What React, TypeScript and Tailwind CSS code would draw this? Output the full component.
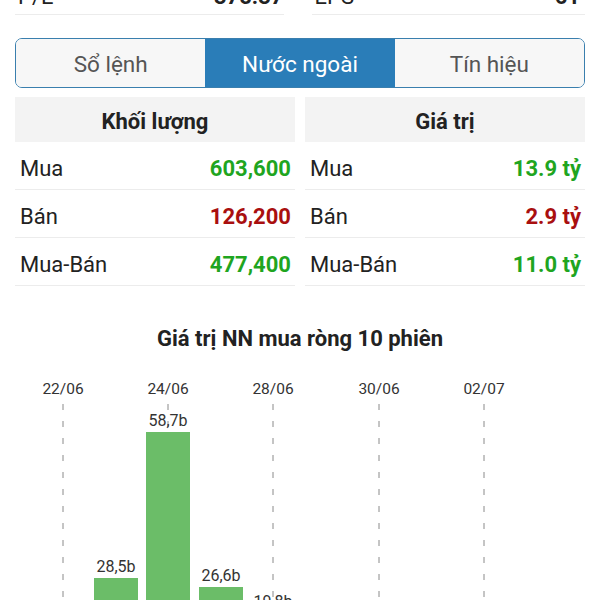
import React from "react"

const font = { fontFamily: "Roboto, 'Noto Sans', sans-serif" }

const tabs = ["Sổ lệnh", "Nước ngoài", "Tín hiệu"]

const volume = [
    { label: "Mua", value: "603,600", tone: "text-[#1fa51f]" },
    { label: "Bán", value: "126,200", tone: "text-[#a90f0f]" },
    { label: "Mua-Bán", value: "477,400", tone: "text-[#1fa51f]" },
]

const money = [
    { label: "Mua", value: "13.9 tỷ", tone: "text-[#1fa51f]" },
    { label: "Bán", value: "2.9 tỷ", tone: "text-[#a90f0f]" },
    { label: "Mua-Bán", value: "11.0 tỷ", tone: "text-[#1fa51f]" },
]

const dates = [
    { x: 63, label: "22/06" },
    { x: 168, label: "24/06" },
    { x: 273, label: "28/06" },
    { x: 379, label: "30/06" },
    { x: 484, label: "02/07" },
]

// top of each bar in page px; chart svg starts at y=374
const bars = [
    { cx: 63, top: 640, label: "" },
    { cx: 116, top: 577, label: "28,5b" },
    { cx: 168, top: 431, label: "58,7b" },
    { cx: 221, top: 586, label: "26,6b" },
    { cx: 273, top: 612, label: "19,8b" },
]

const Table = ({ title, rows }: { title: string; rows: typeof volume }) => (
    <div className="flex-1">
        <div className="h-[45px] bg-[#f3f3f3] flex items-center justify-center text-[22px] font-bold text-[#222] pt-[3px]">
            {title}
        </div>
        {rows.map((r) => (
            <div
                key={r.label}
                className="h-[48px] border-b border-[#ececec] flex items-center justify-between pl-[5px] pr-[4px] pt-[6px] text-[22px]"
            >
                <span className="text-[#222]">{r.label}</span>
                <span className={`font-bold ${r.tone}`}>{r.value}</span>
            </div>
        ))}
    </div>
)

export default function App() {
    return (
        <div className="w-[600px] h-[600px] overflow-hidden bg-white" style={font}>
            {/* cut-off row above */}
            <div className="flex gap-[28px] px-[15px] -mt-[26px]">
                <div className="flex-1 h-[41px] border-b border-[#ececec] flex items-center justify-between text-[22px] font-bold text-[#222] pl-[3px] pt-[4px]">
                    <span className="font-normal">P/E</span>
                    <span>375.37</span>
                </div>
                <div className="flex-1 h-[41px] border-b border-[#ececec] flex items-center justify-between text-[22px] font-bold text-[#222] pl-[3px] pr-[5px] pt-[4px]">
                    <span className="font-normal">EPS</span>
                    <span>61</span>
                </div>
            </div>

            {/* tabs */}
            <div className="mx-[15px] mt-[23px] h-[50px] flex rounded-[7px] border-[1.5px] border-[#3a7fae] overflow-hidden">
                {tabs.map((t, i) => (
                    <div
                        key={t}
                        className={`flex-1 flex items-center justify-center text-[22.5px] pt-[3px] ${
                            i === 1 ? "bg-[#2a7db8] text-white" : "bg-[#f7f7f7] text-[#555]"
                        }`}
                    >
                        {t}
                    </div>
                ))}
            </div>

            {/* tables */}
            <div className="flex gap-[10px] mx-[15px] mt-[9px]">
                <Table title="Khối lượng" rows={volume} />
                <Table title="Giá trị" rows={money} />
            </div>

            {/* chart */}
            <div className="mt-[40px] h-[26px] leading-[26px] text-center text-[22px] font-bold text-[#222]">
                Giá trị NN mua ròng 10 phiên
            </div>
            <svg width="600" height="226" className="block mt-[23px]">
                {dates.map((d) => (
                    <g key={d.label}>
                        <text x={d.x} y={19} textAnchor="middle" fontSize="15.5" fill="#333" fontFamily="Roboto, sans-serif">
                            {d.label}
                        </text>
                        <line x1={d.x} y1={29} x2={d.x} y2={226} stroke="#8a8a8a" strokeWidth="1" strokeDasharray="6 11" />
                    </g>
                ))}
                {bars.map((b) => (
                    <g key={b.cx}>
                        <rect x={b.cx - 22} y={b.top - 374} width={44} height={300} fill="#6bbd68" />
                        {b.label && (
                            <text x={b.cx} y={b.top - 380} textAnchor="middle" fontSize="16" fill="#333" fontFamily="Roboto, sans-serif">
                                {b.label}
                            </text>
                        )}
                    </g>
                ))}
            </svg>
        </div>
    )
}
